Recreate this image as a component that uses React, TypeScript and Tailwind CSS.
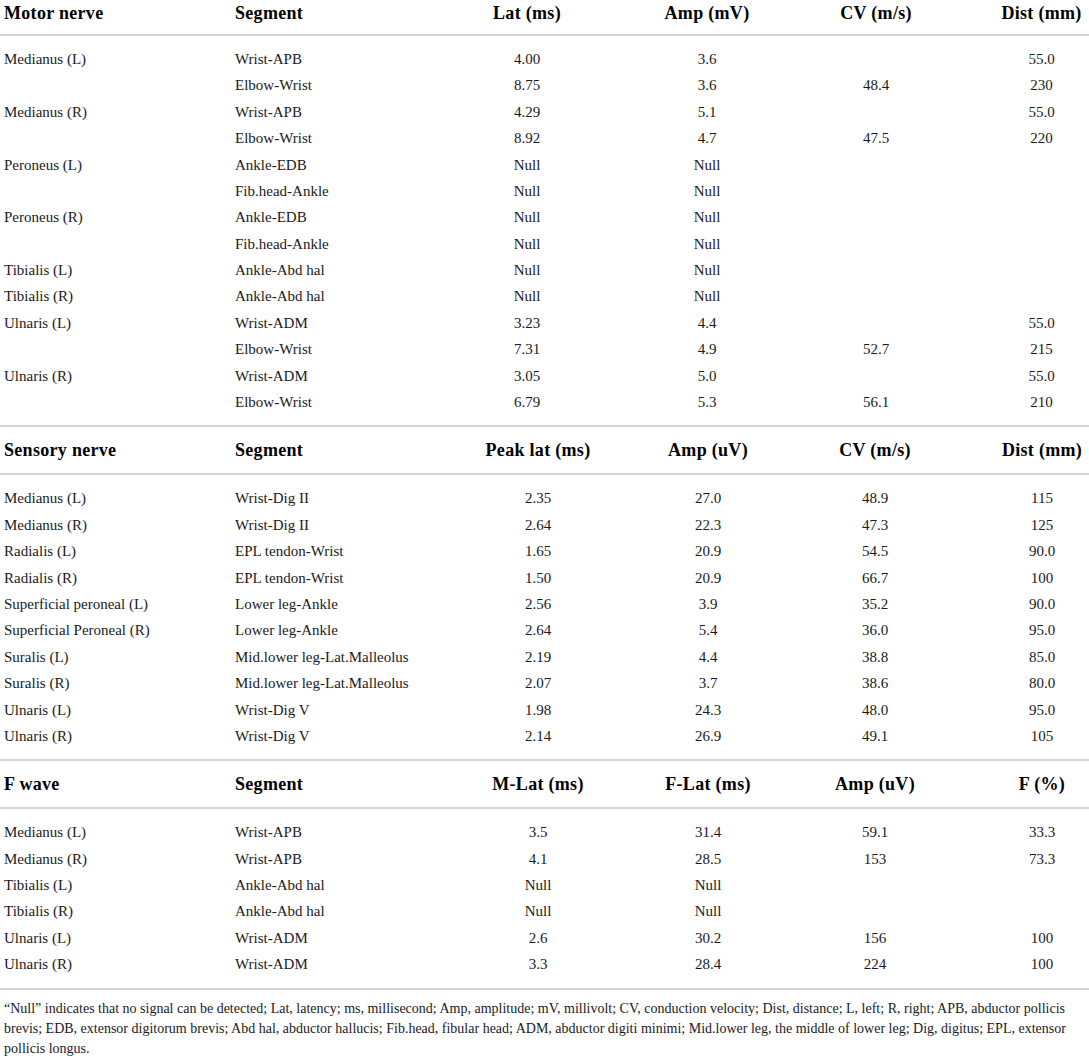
type Row = string[]

const motorRows: Row[] = [
  ['Medianus (L)', 'Wrist-APB', '4.00', '3.6', '', '55.0'],
  ['', 'Elbow-Wrist', '8.75', '3.6', '48.4', '230'],
  ['Medianus (R)', 'Wrist-APB', '4.29', '5.1', '', '55.0'],
  ['', 'Elbow-Wrist', '8.92', '4.7', '47.5', '220'],
  ['Peroneus (L)', 'Ankle-EDB', 'Null', 'Null', '', ''],
  ['', 'Fib.head-Ankle', 'Null', 'Null', '', ''],
  ['Peroneus (R)', 'Ankle-EDB', 'Null', 'Null', '', ''],
  ['', 'Fib.head-Ankle', 'Null', 'Null', '', ''],
  ['Tibialis (L)', 'Ankle-Abd hal', 'Null', 'Null', '', ''],
  ['Tibialis (R)', 'Ankle-Abd hal', 'Null', 'Null', '', ''],
  ['Ulnaris (L)', 'Wrist-ADM', '3.23', '4.4', '', '55.0'],
  ['', 'Elbow-Wrist', '7.31', '4.9', '52.7', '215'],
  ['Ulnaris (R)', 'Wrist-ADM', '3.05', '5.0', '', '55.0'],
  ['', 'Elbow-Wrist', '6.79', '5.3', '56.1', '210'],
]

const sensoryRows: Row[] = [
  ['Medianus (L)', 'Wrist-Dig II', '2.35', '27.0', '48.9', '115'],
  ['Medianus (R)', 'Wrist-Dig II', '2.64', '22.3', '47.3', '125'],
  ['Radialis (L)', 'EPL tendon-Wrist', '1.65', '20.9', '54.5', '90.0'],
  ['Radialis (R)', 'EPL tendon-Wrist', '1.50', '20.9', '66.7', '100'],
  ['Superficial peroneal (L)', 'Lower leg-Ankle', '2.56', '3.9', '35.2', '90.0'],
  ['Superficial Peroneal (R)', 'Lower leg-Ankle', '2.64', '5.4', '36.0', '95.0'],
  ['Suralis (L)', 'Mid.lower leg-Lat.Malleolus', '2.19', '4.4', '38.8', '85.0'],
  ['Suralis (R)', 'Mid.lower leg-Lat.Malleolus', '2.07', '3.7', '38.6', '80.0'],
  ['Ulnaris (L)', 'Wrist-Dig V', '1.98', '24.3', '48.0', '95.0'],
  ['Ulnaris (R)', 'Wrist-Dig V', '2.14', '26.9', '49.1', '105'],
]

const fWaveRows: Row[] = [
  ['Medianus (L)', 'Wrist-APB', '3.5', '31.4', '59.1', '33.3'],
  ['Medianus (R)', 'Wrist-APB', '4.1', '28.5', '153', '73.3'],
  ['Tibialis (L)', 'Ankle-Abd hal', 'Null', 'Null', '', ''],
  ['Tibialis (R)', 'Ankle-Abd hal', 'Null', 'Null', '', ''],
  ['Ulnaris (L)', 'Wrist-ADM', '2.6', '30.2', '156', '100'],
  ['Ulnaris (R)', 'Wrist-ADM', '3.3', '28.4', '224', '100'],
]

// column templates (motor block sits a little further left in col 3)
const motorCols = 'grid grid-cols-[235px_207px_170px_190px_148px_1fr] items-center'
const otherCols = 'grid grid-cols-[235px_218px_170px_170px_164px_1fr] items-center'

function Cells({ row, lastPad }: { row: Row; lastPad: string }) {
  return (
    <>
      <div className="pl-[4px] whitespace-nowrap">{row[0]}</div>
      <div className="whitespace-nowrap">{row[1]}</div>
      <div className="text-center whitespace-nowrap">{row[2]}</div>
      <div className="text-center whitespace-nowrap">{row[3]}</div>
      <div className="text-center whitespace-nowrap">{row[4]}</div>
      <div className={`text-center whitespace-nowrap ${lastPad}`}>{row[5]}</div>
    </>
  )
}

function Rule() {
  return <div className="h-[2px] bg-[#d4d4d4]" />
}

function Block({
  head,
  rows,
  cols,
  lastPad,
  first,
}: {
  head: Row
  rows: Row[]
  cols: string
  lastPad: string
  first?: boolean
}) {
  return (
    <section>
      <div
        className={`${cols} text-[18px] font-bold tracking-[0.3px] text-black ${
          first ? 'h-[34px] pb-[10px]' : 'h-[46px]'
        }`}
      >
        <Cells row={head} lastPad={lastPad} />
      </div>
      <Rule />
      <div className="py-[10px]">
        {rows.map((r, i) => (
          <div key={i} className={`${cols} h-[26.4px] text-[15px] text-[#1a1a1a]`}>
            <Cells row={r} lastPad={lastPad} />
          </div>
        ))}
      </div>
      <Rule />
    </section>
  )
}

export default function App() {
  return (
    <div className="w-[1089px] h-[1058px] overflow-hidden bg-white font-['Liberation_Serif',serif]">
      <Block
        first
        cols={motorCols}
        lastPad="pl-[44px]"
        head={['Motor nerve', 'Segment', 'Lat (ms)', 'Amp (mV)', 'CV (m/s)', 'Dist (mm)']}
        rows={motorRows}
      />
      <Block
        cols={otherCols}
        lastPad="pl-[38px]"
        head={['Sensory nerve', 'Segment', 'Peak lat (ms)', 'Amp (uV)', 'CV (m/s)', 'Dist (mm)']}
        rows={sensoryRows}
      />
      <Block
        cols={otherCols}
        lastPad="pl-[38px]"
        head={['F wave', 'Segment', 'M-Lat (ms)', 'F-Lat (ms)', 'Amp (uV)', 'F (%)']}
        rows={fWaveRows}
      />
      <p className="pt-[9px] pl-[4px] text-[14px] leading-[20px] text-[#1a1a1a]">
        “Null” indicates that no signal can be detected; Lat, latency; ms, millisecond; Amp, amplitude; mV,
        millivolt; CV, conduction velocity; Dist, distance; L, left; R, right; APB, abductor pollicis brevis; EDB,
        extensor digitorum brevis; Abd hal, abductor hallucis; Fib.head, fibular head; ADM, abductor digiti minimi;
        Mid.lower leg, the middle of lower leg; Dig, digitus; EPL, extensor pollicis longus.
      </p>
    </div>
  )
}
